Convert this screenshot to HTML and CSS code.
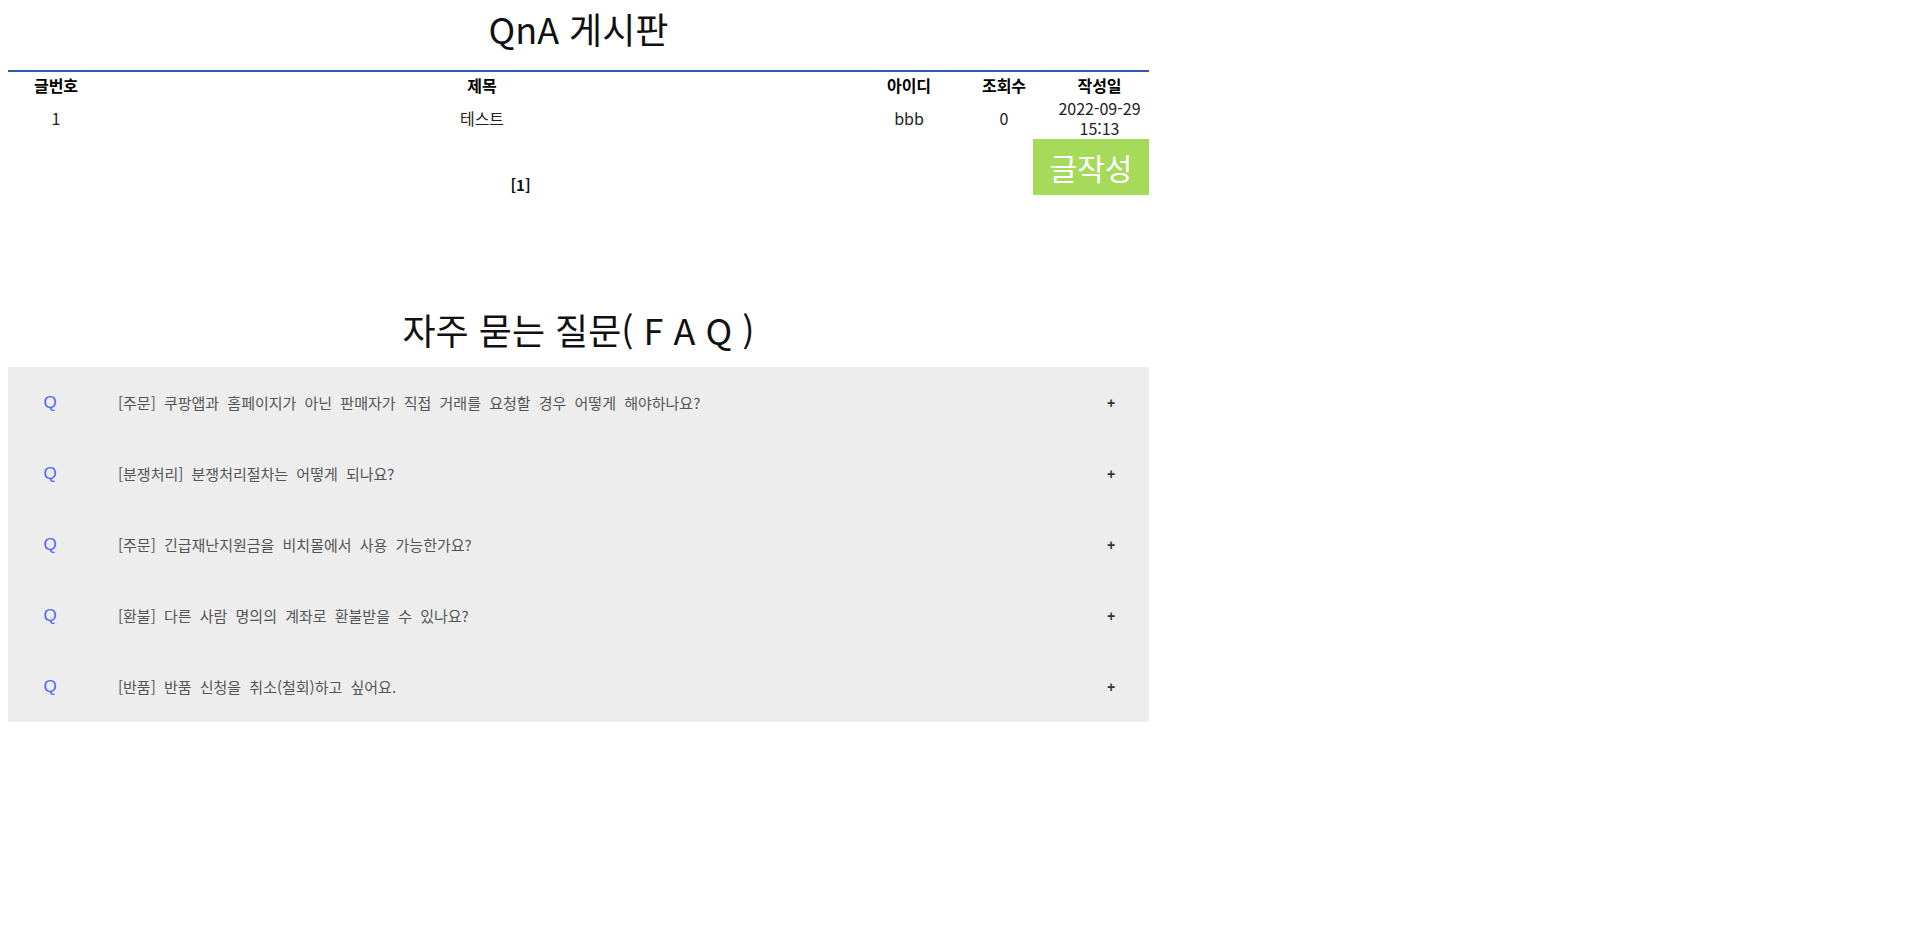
FILE: index.html
```html
<!DOCTYPE html>
<html lang="ko">
<head>
<meta charset="utf-8">
<title>QnA 게시판</title>
<link rel="stylesheet" href="styles.css">
</head>
<body>
<div class="wrap">
  <h2 class="board-title">QnA 게시판</h2>
  <table class="board">
    <colgroup>
      <col class="c-no"><col class="c-title"><col class="c-id"><col class="c-hit"><col class="c-date">
    </colgroup>
    <thead>
      <tr><th>글번호</th><th>제목</th><th>아이디</th><th>조회수</th><th>작성일</th></tr>
    </thead>
    <tbody>
      <tr><td>1</td><td>테스트</td><td>bbb</td><td>0</td><td>2022-09-29 15:13</td></tr>
    </tbody>
  </table>
  <div class="paging-row">
    <div class="paging">[1]</div>
    <button class="write-btn" type="button">글작성</button>
  </div>

  <h2 class="faq-title">자주 묻는 질문( F A Q )</h2>
  <ul class="faq">
    <li class="faq-item"><span class="q">Q</span><span class="qt">[주문] 쿠팡앱과 홈페이지가 아닌 판매자가 직접 거래를 요청할 경우 어떻게 해야하나요?</span><span class="plus">+</span></li>
    <li class="faq-item"><span class="q">Q</span><span class="qt">[분쟁처리] 분쟁처리절차는 어떻게 되나요?</span><span class="plus">+</span></li>
    <li class="faq-item"><span class="q">Q</span><span class="qt">[주문] 긴급재난지원금을 비치몰에서 사용 가능한가요?</span><span class="plus">+</span></li>
    <li class="faq-item"><span class="q">Q</span><span class="qt">[환불] 다른 사람 명의의 계좌로 환불받을 수 있나요?</span><span class="plus">+</span></li>
    <li class="faq-item"><span class="q">Q</span><span class="qt">[반품] 반품 신청을 취소(철회)하고 싶어요.</span><span class="plus">+</span></li>
  </ul>
</div>
</body>
</html>
```
FILE: styles.css
```css
html, body {
  margin: 0;
  padding: 0;
  background: #fff;
}
body {
  margin: 8px;
  font-family: "Noto Sans CJK KR", "Noto Sans", sans-serif;
  color: #222;
}
.wrap {
  width: 1141px;
}
.board-title {
  margin: 0;
  font-size: 36px;
  line-height: 40px;
  font-weight: 400;
  text-align: center;
  color: #111;
}
.board {
  margin-top: 22px;
  width: 100%;
  border-collapse: collapse;
  table-layout: fixed;
  border-top: 2px solid #2f5aab;
  font-size: 16px;
}
.c-no { width: 96px; }
.c-title { width: 756px; }
.c-id { width: 98px; }
.c-hit { width: 92px; }
.c-date { width: 99px; }
.board th {
  font-weight: 700;
  line-height: 20px;
  padding: 3px 0;
  text-align: center;
  color: #000;
}
.board td {
  line-height: 20px;
  padding: 0;
  text-align: center;
  color: #222;
  vertical-align: middle;
}
.paging-row {
  display: flex;
  align-items: flex-end;
  margin-top: 1px;
}
.paging {
  flex: 1;
  text-align: center;
  font-weight: 700;
  font-size: 15px;
  line-height: 20px;
  color: #111;
}
.write-btn {
  width: 116px;
  height: 56px;
  border: 0;
  padding: 0;
  background: #a6da5b;
  color: #fff;
  font-family: "Noto Sans CJK KR", sans-serif;
  font-size: 30px;
  line-height: 56px;
}
.faq-title {
  margin: 110px 0 0;
  font-size: 36px;
  line-height: 48px;
  font-weight: 400;
  text-align: center;
  color: #111;
}
.faq {
  list-style: none;
  margin: 14px 0 0;
  padding: 0;
  background: #ededed;
}
.faq-item {
  display: grid;
  grid-template-columns: 84px 1fr 76px;
  align-items: center;
  height: 71px;
}
.q {
  text-align: center;
  font-family: "Liberation Sans", Arial, sans-serif;
  font-size: 17px;
  color: #4f66f5;
}
.qt {
  padding-left: 26px;
  font-size: 15px;
  word-spacing: 4px;
  color: #555;
}
.plus {
  text-align: center;
  font-family: "Liberation Sans", Arial, sans-serif;
  font-weight: 700;
  font-size: 14px;
  color: #333;
}
```
